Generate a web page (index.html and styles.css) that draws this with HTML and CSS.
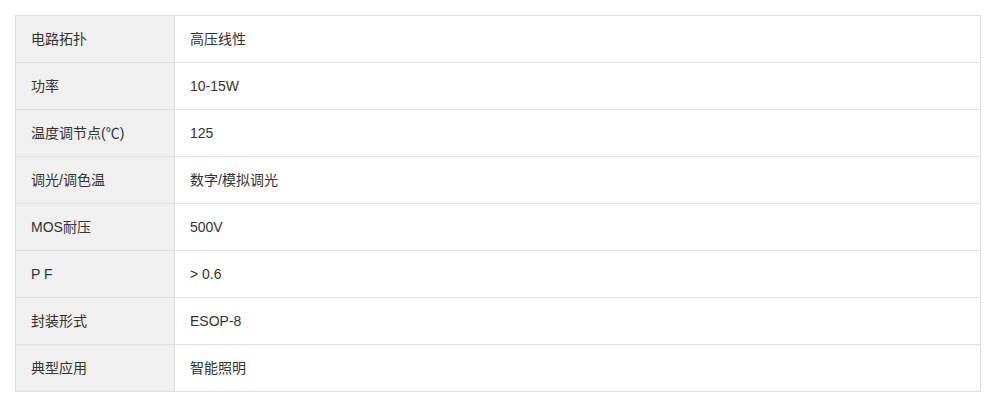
FILE: index.html
```html
<!DOCTYPE html>
<html lang="zh">
<head>
<meta charset="utf-8">
<link rel="stylesheet" href="styles.css">
</head>
<body>
<div class="wrap">
<table class="spec">
<tbody>
<tr><td class="k">电路拓扑</td><td class="v">高压线性</td></tr>
<tr><td class="k">功率</td><td class="v">10-15W</td></tr>
<tr><td class="k">温度调节点(℃)</td><td class="v">125</td></tr>
<tr><td class="k">调光/调色温</td><td class="v">数字/模拟调光</td></tr>
<tr><td class="k">MOS耐压</td><td class="v">500V</td></tr>
<tr><td class="k">P F</td><td class="v">&gt; 0.6</td></tr>
<tr><td class="k">封装形式</td><td class="v">ESOP-8</td></tr>
<tr><td class="k">典型应用</td><td class="v">智能照明</td></tr>
</tbody>
</table>
</div>
</body>
</html>
```
FILE: styles.css
```css
html, body {
  margin: 0;
  padding: 0;
  background: #fff;
}
.wrap {
  padding: 15px 0 0 15px;
}
.spec {
  width: 966px;
  border-collapse: collapse;
  font-family: "Liberation Sans", Arial, "Noto Sans CJK SC", sans-serif;
  font-size: 14px;
  color: #333;
}
.spec td {
  border: 1px solid #ddd;
  height: 47px;
  padding: 0 15px;
  box-sizing: border-box;
  vertical-align: middle;
  line-height: 20px;
  text-align: left;
}
.spec td.k {
  width: 159px;
  background: #f0f0f0;
}
.spec td.v {
  background: #fff;
}
```
